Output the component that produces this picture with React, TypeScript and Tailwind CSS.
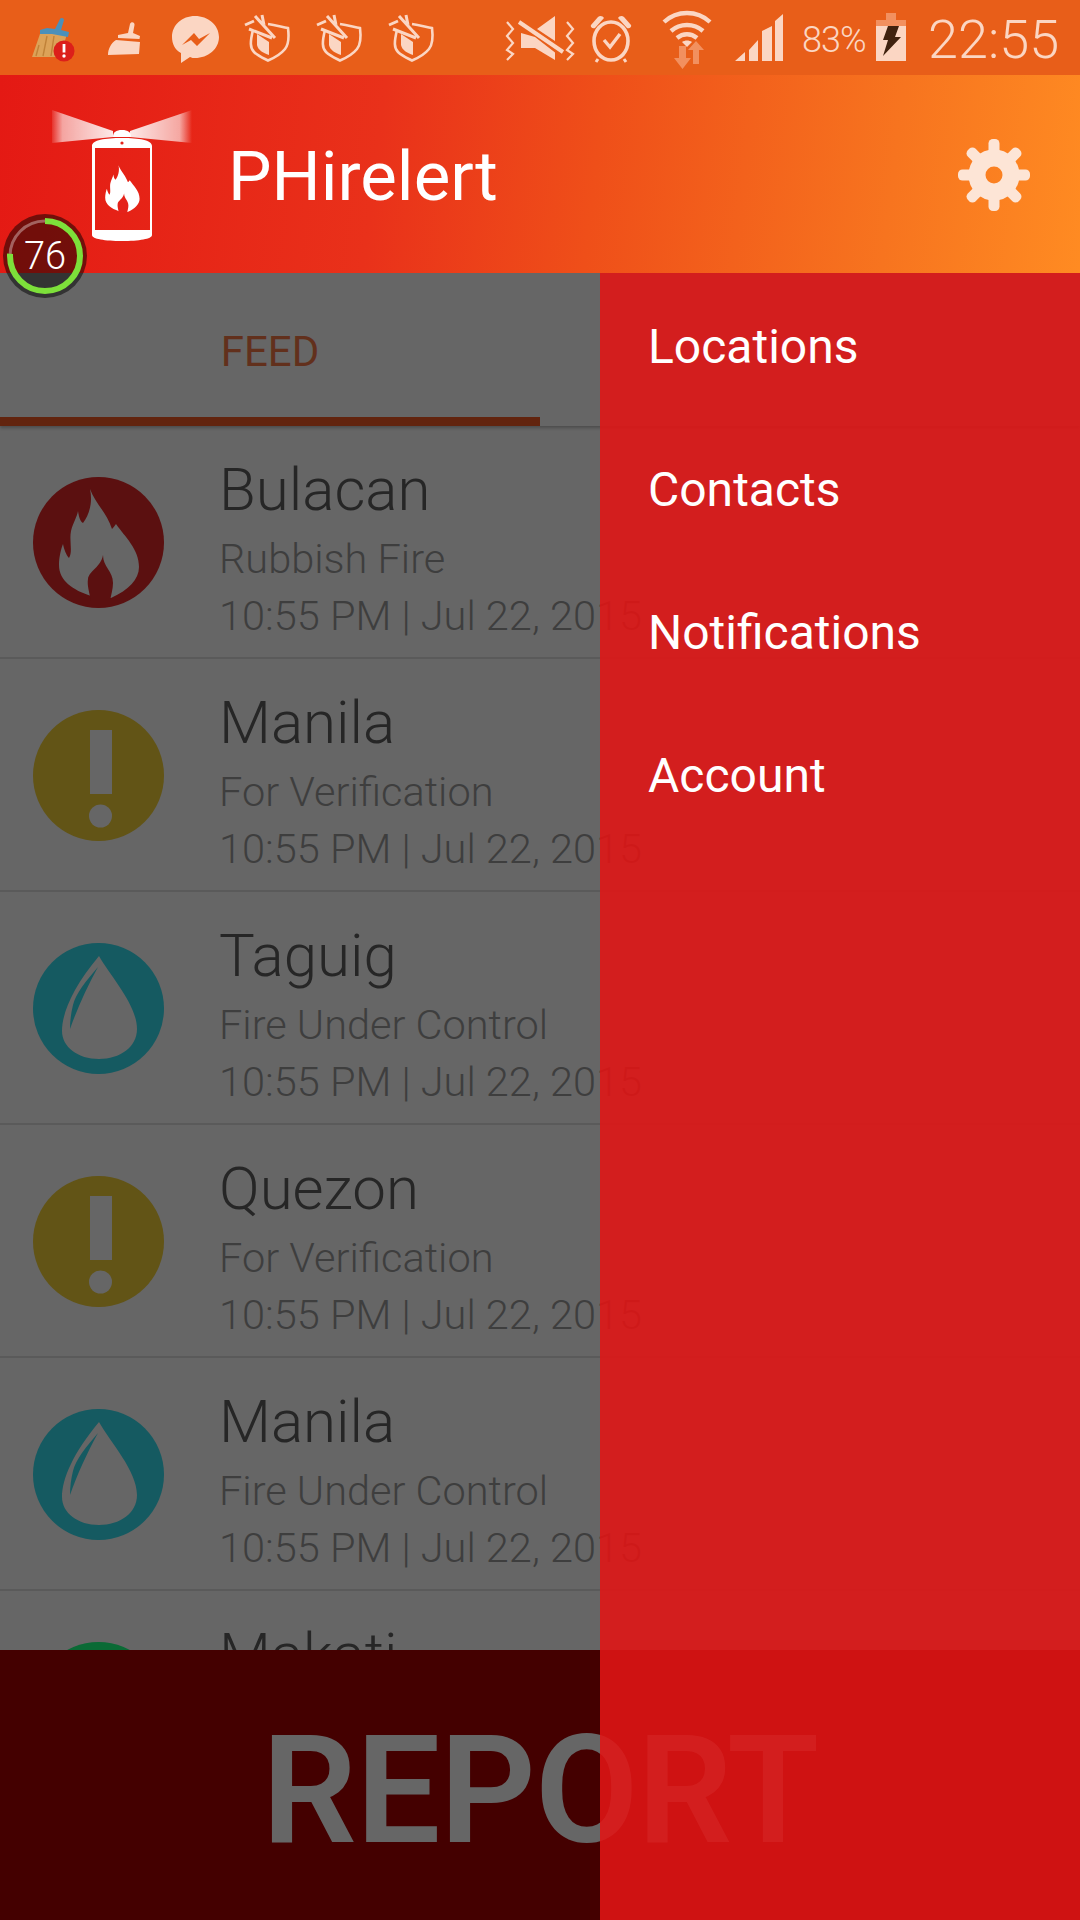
import React from 'react';

const ICON = '#fbd6c3';
const ARROW = '#f2905f';
const BAR = '#e85e19';

const FLAME =
  'M57 12C62 26 74 36 79 52C81 50 82 48 83 47C92 60 106 72 106 90C106 102 96 113 78 121L58 119C40 113 26 104 26 88C26 80 28 72 30 67C31 72 33 78 36 81C40 74 36 64 38 54C40 46 44 40 45 34C46 40 47 44 50 46C56 38 60 26 57 12Z';
const FLAME_INNER =
  'M70 78C70 90 80 94 80 106C80 112 78 118 77 124L58 124C56 114 54 108 55 102C56 94 68 90 70 78Z';

// Status bar icons are drawn in page coordinates, x shifted through the viewBox
function Icon({ x, w, ml, children }: { x: number; w: number; ml: number; children: React.ReactNode }) {
  return (
    <svg width={w} height={75} viewBox={`${x} 0 ${w} 75`} className="shrink-0" style={{ marginLeft: ml }}>
      {children}
    </svg>
  );
}

function CleanBroom() {
  return (
    <Icon x={28} w={50} ml={28}>
      <path d="M41 31L32 57L60 57L67 34Z" fill="#dca258" />
      <path d="M39 45L36 56M47 36L43 56M54 36L51 56" stroke="#c08238" strokeWidth="1.4" fill="none" />
      <path d="M40 30L47 28L55 29L60 19C61 17 64 18 64 20L61 30L69 32L68 37L52 34L40 34Z" fill="#4b90ba" />
      <circle cx="64" cy="51" r="10.5" fill="#dc1f1a" />
      <rect x="62.6" y="44" width="2.8" height="8.5" fill="#fff" />
      <circle cx="64" cy="56" r="1.7" fill="#fff" />
    </Icon>
  );
}

function WhiteBroom() {
  return (
    <Icon x={106} w={36} ml={28}>
      <path
        d="M118 35L128 33L130 24C131 21 135 22 134.5 25L133 33L140 36L139.5 39L118 38ZM116 40L140 42L139 54L108 55C108 49 111 43 116 40Z"
        fill={ICON}
      />
    </Icon>
  );
}

function Messenger() {
  return (
    <Icon x={170} w={52} ml={28}>
      <path d="M195 16C182 16 172 25 172 37C172 44 175 50 181 53L181 63L190 57C192 58 193 58 195 58C208 58 219 49 219 37C219 25 208 16 195 16Z" fill={ICON} />
      <path d="M182 45L194 33L199 39L210 33L197 46L191 40Z" fill={BAR} />
    </Icon>
  );
}

function Shield({ ml }: { ml: number }) {
  return (
    <Icon x={244} w={48} ml={ml}>
      <path d="M253 30C250 42 250 48 254 52C258 56 263 58 268 60.5C274 58 281 54 285 49C289 44 289 36 288 28C282 27 276 25 268 24" fill="none" stroke={ICON} strokeWidth="2.6" />
      <path d="M257 34L269 42L269 55C263 53 258 50 257 45Z" fill={ICON} />
      <path d="M245 25L254 21M255 16L275 38M249 29L272 38M262 15L264 25" stroke={ICON} strokeWidth="3" fill="none" />
    </Icon>
  );
}

function MuteVibrate() {
  return (
    <Icon x={504} w={76} ml={0}>
      <path d="M521 33L555 60L555 52.5L535 37ZM521 33V48H535L555 60ZM537 29L555 16V41Z" fill={ICON} />
      <path d="M519 22L563 52" stroke={ICON} strokeWidth="4" />
      <path d="M507 22L513 29L507 36L513 43L507 50L513 54L507 60" fill="none" stroke={ICON} strokeWidth="2.2" />
      <path d="M567 22L573 29L567 36L573 43L567 50L573 54L567 60" fill="none" stroke={ICON} strokeWidth="2.2" />
    </Icon>
  );
}

function Alarm() {
  return (
    <Icon x={586} w={52} ml={6}>
      <ellipse cx="611" cy="41" rx="17" ry="19" fill="none" stroke={ICON} strokeWidth="3.6" />
      <path d="M591 25L598 17C600 15 603 16 604 18L595 28C593 29 590 27 591 25ZM631 25L624 17C622 15 619 16 618 18L627 28C629 29 632 27 631 25Z" fill={ICON} />
      <path d="M604 40L610 47L620 34" fill="none" stroke={ICON} strokeWidth="3.4" />
      <path d="M598 59L596 62M624 59L626 62" stroke={ICON} strokeWidth="3" />
    </Icon>
  );
}

function Wifi() {
  return (
    <Icon x={660} w={54} ml={22}>
      <path d="M664 22C677 10 697 10 710 22" fill="none" stroke={ICON} strokeWidth="4.4" />
      <path d="M671 31C680 23 694 23 703 31" fill="none" stroke={ICON} strokeWidth="4.4" />
      <path d="M677 38C683 33 691 33 697 38" fill="none" stroke={ICON} strokeWidth="4.4" />
      <path d="M682 42C685 40 689 40 692 42L687 47Z" fill={ICON} />
      <path d="M679 46H686V58H691L682.5 69L674 58H679ZM693 64V50H688L696 41L704 50H699V64Z" fill={ARROW} />
    </Icon>
  );
}

function Signal() {
  return (
    <Icon x={733} w={52} ml={19}>
      <path d="M735 61L745 52V61ZM749 61V50L758 40V61ZM762 61V31L772 26V61ZM775 61V21L783 14V61Z" fill={ICON} />
    </Icon>
  );
}

function Battery() {
  return (
    <Icon x={874} w={34} ml={0}>
      <path d="M886 13H896V20H906V26H876V20H886Z" fill={ARROW} />
      <rect x="876" y="26" width="30" height="35" fill={ICON} />
      <path d="M888 26H899L895 37H901L883 56L888 40H883Z" fill="#40220f" />
    </Icon>
  );
}

function StatusBar() {
  return (
    <div className="flex h-[75px] shrink-0 items-start bg-[#e85e19]">
      <CleanBroom />
      <WhiteBroom />
      <Messenger />
      <Shield ml={22} />
      <Shield ml={24} />
      <Shield ml={24} />
      <div className="ml-[68px] flex items-start">
        <MuteVibrate />
        <Alarm />
        <Wifi />
        <Signal />
        <span className="mt-[18px] ml-[17px] w-[72px] text-[36px] leading-[44px] font-light tracking-[-1px] text-[#fbd6c3]">
          83%
        </span>
        <Battery />
        <span className="mt-[8px] ml-[20px] text-[54px] leading-[64px] font-light text-[#fbd6c3]">22:55</span>
      </div>
    </div>
  );
}

function Logo() {
  return (
    <svg width={228} height={198} viewBox="0 75 228 198" className="shrink-0">
      <defs>
        <linearGradient id="beamL" x1="113" y1="0" x2="50" y2="0" gradientUnits="userSpaceOnUse">
          <stop offset="0" stopColor="#fff" stopOpacity="0.9" />
          <stop offset="0.8" stopColor="#fff" stopOpacity="0.6" />
          <stop offset="1" stopColor="#fff" stopOpacity="0" />
        </linearGradient>
        <linearGradient id="beamR" x1="130" y1="0" x2="192" y2="0" gradientUnits="userSpaceOnUse">
          <stop offset="0" stopColor="#fff" stopOpacity="0.9" />
          <stop offset="0.8" stopColor="#fff" stopOpacity="0.6" />
          <stop offset="1" stopColor="#fff" stopOpacity="0" />
        </linearGradient>
        <filter id="soft" x="-10%" y="-10%" width="120%" height="120%">
          <feGaussianBlur stdDeviation="0.7" />
        </filter>
      </defs>
      <path d="M113 131L52 110V143L113 137Z" fill="url(#beamL)" filter="url(#soft)" />
      <path d="M130 131L192 110V143L130 137Z" fill="url(#beamR)" filter="url(#soft)" />
      <path d="M113 137C113 132 116 130 122 130C128 130 131 132 131 137Z" fill="#fff" />
      <path
        fillRule="evenodd"
        d="M92 146C92 140 105 138 122 138C139 138 152 140 152 146V235C152 239 139 241 122 241C105 241 92 239 92 235ZM95 148V230H150V148Z"
        fill="#fff"
      />
      <circle cx="122" cy="143" r="1.6" fill="#e5221a" />
      <g transform="translate(94 160) scale(0.43)">
        <path d={FLAME} fill="#fff" />
        <path d={FLAME_INNER} fill="#e5221a" />
      </g>
    </svg>
  );
}

function Gear() {
  const teeth = [0, 45, 90, 135, 180, 225, 270, 315];
  return (
    <svg width={76} height={76} viewBox="-38 -38 76 76" className="mt-[2px] shrink-0">
      <circle r="17" fill="none" stroke="#fde5d6" strokeWidth="17" />
      {teeth.map(a => (
        <rect key={a} x="-5.5" y="-36" width="11" height="16" rx="4.5" fill="#fde5d6" transform={`rotate(${a})`} />
      ))}
    </svg>
  );
}

function Header() {
  return (
    <div className="flex h-[198px] shrink-0 items-center bg-[linear-gradient(97deg,#e41914_0%,#e9311a_35%,#ef4f19_55%,#f7741f_82%,#ff8b22_100%)] pr-[48px]">
      <Logo />
      <span className="flex-1 pt-[6px] text-[69px] leading-[80px] text-white">PHirelert</span>
      <Gear />
    </div>
  );
}

function Badge() {
  return (
    <div className="absolute top-[214px] left-[3px] flex h-[84px] w-[84px] items-center justify-center rounded-full bg-[rgba(0,0,0,0.5)]">
      <svg width={84} height={84} viewBox="0 0 84 84" className="absolute inset-0">
        <circle cx="42" cy="42" r="35" fill="none" stroke="rgba(255,255,255,0.35)" strokeWidth="3" />
        <circle
          cx="42"
          cy="42"
          r="35"
          fill="none"
          stroke="#7de03a"
          strokeWidth="6"
          strokeDasharray="167 220"
          transform="rotate(-90 42 42)"
        />
      </svg>
      <span className="relative text-[38px] leading-[44px] font-light text-white">76</span>
    </div>
  );
}

function FireIcon() {
  return (
    <svg width={131} height={131} viewBox="0 0 131 131">
      <circle cx="65.5" cy="65.5" r="65.5" fill="#5b1010" />
      <path d={FLAME} fill="#666" />
      <path d={FLAME_INNER} fill="#5b1010" />
    </svg>
  );
}

function AlertIcon() {
  return (
    <svg width={131} height={131} viewBox="0 0 131 131">
      <circle cx="65.5" cy="65.5" r="65.5" fill="#625416" />
      <rect x="57" y="20" width="22" height="64" fill="#666" />
      <circle cx="67.5" cy="106" r="11.5" fill="#666" />
    </svg>
  );
}

function WaterIcon() {
  return (
    <svg width={131} height={131} viewBox="0 0 131 131">
      <circle cx="65.5" cy="65.5" r="65.5" fill="#155a61" />
      <path d="M66 13C78 34 104 62 104 86C104 104 87 116 66 116C45 116 29 104 29 88C29 70 40 44 66 13Z" fill="#666" />
      <path d="M65 24C53 38 43 50 40 62C38 70 37 78 37 86C44 66 54 44 65 24Z" fill="#155a61" />
    </svg>
  );
}

function GreenIcon() {
  return (
    <svg width={131} height={131} viewBox="0 0 131 131">
      <circle cx="65.5" cy="65.5" r="65.5" fill="#0a6a35" />
    </svg>
  );
}

const rows = [
  { city: 'Bulacan', status: 'Rubbish Fire', icon: <FireIcon /> },
  { city: 'Manila', status: 'For Verification', icon: <AlertIcon /> },
  { city: 'Taguig', status: 'Fire Under Control', icon: <WaterIcon /> },
  { city: 'Quezon', status: 'For Verification', icon: <AlertIcon /> },
  { city: 'Manila', status: 'Fire Under Control', icon: <WaterIcon /> },
  { city: 'Makati', icon: <GreenIcon /> },
];

function Row({ city, status, icon }: { city: string; status?: string; icon: React.ReactNode }) {
  return (
    <div className="flex h-[233px] shrink-0 items-start border-b-2 border-[#5a5a5a] pl-[33px]">
      <div className="mt-[51px] h-[131px] w-[131px] shrink-0">{icon}</div>
      <div className="ml-[55px] flex flex-col pt-[30px] whitespace-nowrap font-light">
        <span className="text-[60px] leading-[68px] text-[#262626]">{city}</span>
        {status && (
          <>
            <span className="mt-[6px] text-[41.5px] leading-[58px] text-[#3e3e3e]">{status}</span>
            <span className="text-[41.5px] leading-[55px] text-[#3e3e3e]">10:55 PM | Jul 22, 2015</span>
          </>
        )}
      </div>
    </div>
  );
}

function Drawer() {
  return (
    <div className="absolute top-0 right-0 bottom-0 flex w-[480px] flex-col bg-[rgba(226,20,20,0.88)] pt-[2px]">
      {['Locations', 'Contacts', 'Notifications', 'Account'].map(item => (
        <div key={item} className="flex h-[143px] items-center pl-[48px] text-[48px] leading-[56px] text-white">
          {item}
        </div>
      ))}
    </div>
  );
}

export default function App() {
  return (
    <div className="relative flex h-[1920px] w-[1080px] flex-col overflow-hidden bg-[#666] [font-family:Roboto,sans-serif]">
      <StatusBar />
      <Header />
      <div className="relative flex flex-1 flex-col overflow-hidden">
        <div className="flex h-[153px] shrink-0 flex-col shadow-[0_2px_3px_rgba(0,0,0,0.25)]">
          <div className="flex h-[144px] w-[540px] items-center justify-center pt-[14px] text-[42px] leading-[48px] text-[#62301c]">
            FEED
          </div>
          <div className="h-[9px] w-[540px] bg-[#62240e]" />
        </div>
        <div className="flex flex-1 flex-col overflow-hidden">
          {rows.map((r, i) => (
            <Row key={i} {...r} />
          ))}
        </div>
        <div className="flex h-[270px] shrink-0 items-center justify-center bg-[#440000] pt-[12px] text-[150px] leading-[170px] font-semibold tracking-[-1px] text-[#666]">
          REPORT
        </div>
        <Drawer />
      </div>
      <Badge />
    </div>
  );
}
